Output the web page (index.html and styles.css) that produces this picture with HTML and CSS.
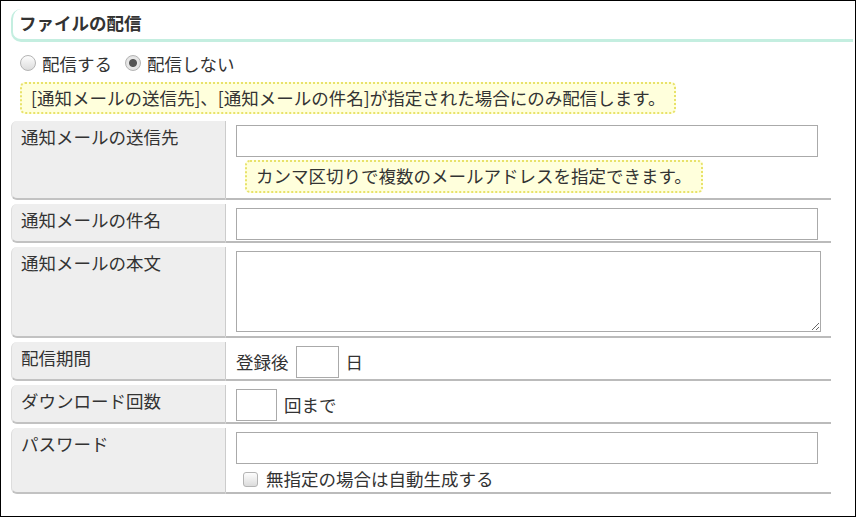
FILE: index.html
```html
<!DOCTYPE html>
<html lang="ja">
<head>
    <meta charset="UTF-8">
    <title>ファイルの配信</title>
    <link rel="stylesheet" href="styles.css">
</head>
<body>
    <div class="frame">
        <h2 class="section-title">ファイルの配信</h2>

        <div class="radio-row">
            <label class="radio"><input type="radio" name="deliver" value="1"><span>配信する</span></label>
            <label class="radio"><input type="radio" name="deliver" value="0" checked><span>配信しない</span></label>
        </div>

        <div class="notice">[通知メールの送信先]、[通知メールの件名]が指定された場合にのみ配信します。</div>

        <div class="form-table">
            <div class="form-row">
                <div class="form-label">通知メールの送信先</div>
                <div class="form-value">
                    <input type="text" class="text-input">
                    <div class="notice hint">カンマ区切りで複数のメールアドレスを指定できます。</div>
                </div>
            </div>
            <div class="form-row">
                <div class="form-label">通知メールの件名</div>
                <div class="form-value">
                    <input type="text" class="text-input">
                </div>
            </div>
            <div class="form-row">
                <div class="form-label">通知メールの本文</div>
                <div class="form-value">
                    <textarea class="text-area"></textarea>
                </div>
            </div>
            <div class="form-row">
                <div class="form-label">配信期間</div>
                <div class="form-value inline">
                    <span>登録後</span>
                    <input type="text" class="short-input days">
                    <span>日</span>
                </div>
            </div>
            <div class="form-row">
                <div class="form-label">ダウンロード回数</div>
                <div class="form-value inline">
                    <input type="text" class="short-input">
                    <span>回まで</span>
                </div>
            </div>
            <div class="form-row">
                <div class="form-label">パスワード</div>
                <div class="form-value">
                    <input type="text" class="text-input">
                    <label class="check"><input type="checkbox"><span>無指定の場合は自動生成する</span></label>
                </div>
            </div>
        </div>
    </div>
</body>
</html>
```

FILE: styles.css
```css
html, body {
    margin: 0;
    padding: 0;
}
body {
    font-family: "Noto Sans CJK JP", "Noto Sans", sans-serif;
    font-size: 17.5px;
    color: #333;
    background-color: #fff;
}
.frame {
    box-sizing: border-box;
    width: 856px;
    height: 517px;
    border: 1px solid #000;
    padding: 8px 2px 0 10px;
}
.section-title {
    margin: 0;
    height: 30px;
    line-height: 28px;
    padding-left: 6px;
    font-size: 17.5px;
    font-weight: bold;
    color: #333;
    border-left: 2px solid #c4eee0;
    border-bottom: 3px solid #c4eee0;
    border-radius: 10px 0 0 10px;
}

/* radio buttons */
.radio-row {
    display: flex;
    gap: 13px;
    margin: 7px 0 0 9px;
    height: 28px;
    align-items: center;
}
.radio, .check {
    display: flex;
    align-items: center;
    gap: 6px;
}
.radio input, .check input {
    appearance: none;
    -webkit-appearance: none;
    margin: 0;
    width: 16px;
    height: 16px;
    border: 1px solid #b4b4b4;
    background: linear-gradient(#fdfdfd, #dcdcdc);
    box-sizing: border-box;
}
.radio input {
    border-radius: 50%;
}
.radio input:checked {
    background: radial-gradient(circle, #555 0, #555 3.5px, #e8e8e8 4.5px, #dcdcdc 100%);
}
.check input {
    width: 15px;
    height: 15px;
    border-radius: 3px;
}

/* yellow note boxes */
.notice {
    box-sizing: border-box;
    width: fit-content;
    height: 32px;
    margin: 5px 0 0 9px;
    padding: 2px 9px;
    line-height: 24px;
    white-space: nowrap;
    background-color: #ffffdc;
    border: 2px dotted #e8e26a;
    border-radius: 5px;
}
.hint {
    height: 33px;
    margin: 3px 0 4px 9px;
}

/* form rows */
.form-table {
    margin-top: 7px;
    width: 820px;
    display: flex;
    flex-direction: column;
    gap: 4px;
}
.form-row {
    display: flex;
}
.form-label {
    box-sizing: border-box;
    width: 215px;
    padding: 4px 9px;
    line-height: 24px;
    background-color: #eee;
    border-left: 1px solid #ddd;
    border-right: 1px solid #ccc;
    border-bottom: 2px solid #c2c2c2;
    border-radius: 6px 0 0 6px;
}
.form-value {
    flex: 1;
    padding: 4px 10px 1px 10px;
    border-bottom: 2px solid #bbb;
    line-height: 24px;
}
.form-value.inline {
    display: flex;
    align-items: center;
    gap: 7px;
}
.text-input, .short-input, .text-area {
    box-sizing: border-box;
    display: block;
    border: 1px solid #aaa;
    border-radius: 0;
    font: inherit;
    margin: 0;
}
.text-input {
    width: 582px;
    height: 32px;
}
.text-area {
    width: 585px;
    height: 81px;
    margin-bottom: 3px;
    resize: both;
}
.short-input {
    width: 41px;
    height: 32px;
}
.short-input.days {
    width: 43px;
}
.check {
    margin: 3px 0 0 7px;
    gap: 8px;
}
```
